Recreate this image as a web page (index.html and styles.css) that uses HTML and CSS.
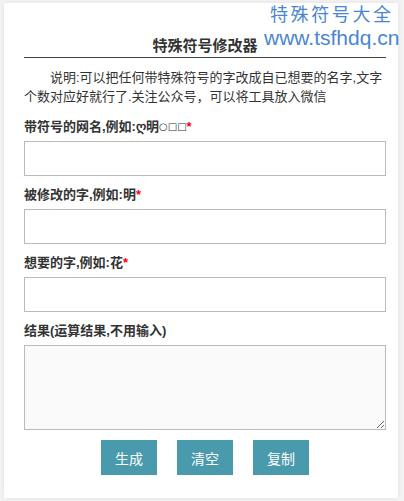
FILE: index.html
```html
<!DOCTYPE html>
<html lang="zh">
<head>
<meta charset="utf-8">
<title>特殊符号修改器</title>
<link rel="stylesheet" href="styles.css">
</head>
<body>
<div class="card">
  <h1 class="title">特殊符号修改器</h1>
  <p class="desc">说明:可以把任何带特殊符号的字改成自已想要的名字,文字个数对应好就行了.关注公众号，可以将工具放入微信</p>
  <div class="field">
    <label class="label">带符号的网名,例如:ღ明<span class="sym">○□□</span><span class="req">*</span></label>
    <input class="input" type="text">
  </div>
  <div class="field">
    <label class="label">被修改的字,例如:明<span class="req">*</span></label>
    <input class="input" type="text">
  </div>
  <div class="field">
    <label class="label">想要的字,例如:花<span class="req">*</span></label>
    <input class="input" type="text">
  </div>
  <div class="field">
    <label class="label">结果(运算结果,不用输入)</label>
    <textarea class="result"></textarea>
  </div>
  <div class="actions">
    <button class="btn">生成</button>
    <button class="btn">清空</button>
    <button class="btn">复制</button>
  </div>
</div>
<div class="watermark">
  <div class="wm-cn">特殊符号大全</div>
  <div class="wm-en">www.tsfhdq.cn</div>
</div>
</body>
</html>
```
FILE: styles.css
```css
html, body {
  margin: 0;
  padding: 0;
}
body {
  background: #f3f3f3;
  font-family: "Liberation Sans", "Noto Sans CJK SC", sans-serif;
  color: #333;
  font-size: 13px;
  position: relative;
  height: 501px;
  overflow: hidden;
}
.card {
  margin: 3px 6px 0 4px;
  background: #fff;
  box-shadow: 0 0 5px rgba(0,0,0,0.08);
  padding: 32px 12px 23px 20px;
}
.title {
  margin: 0;
  font-size: 15px;
  font-weight: bold;
  line-height: 21px;
  text-align: center;
  padding-bottom: 1px;
  border-bottom: 1px solid #444;
  color: #333;
}
.desc {
  margin: 10px 0 0 0;
  text-indent: 2em;
  line-height: 19px;
  font-size: 13px;
  color: #333;
}
.field {
  margin-top: 11px;
  display: flex;
  flex-direction: column;
}
.field + .field {
  margin-top: 9px;
}
.label {
  font-weight: bold;
  line-height: 20px;
  height: 20px;
  margin-bottom: 4px;
  color: #333;
}
.sym {
  font-size: 10px;
  font-weight: normal;
  font-family: "DejaVu Sans", sans-serif;
  vertical-align: 1px;
}
.req {
  color: #f00;
  font-weight: bold;
}
.input {
  box-sizing: border-box;
  width: 362px;
  height: 35px;
  margin: 0;
  border: 1px solid #bbb;
  background: #fff;
  padding: 0 8px;
  outline: none;
}
.result {
  box-sizing: border-box;
  width: 362px;
  height: 85px;
  margin: 0;
  border: 1px solid #bbb;
  background: #fafafa;
  padding: 6px 8px;
  resize: both;
  outline: none;
  display: block;
}
.actions {
  margin-top: 10px;
  display: flex;
  justify-content: center;
  gap: 20px;
}
.btn {
  width: 56px;
  height: 35px;
  border: none;
  background: #4a9aad;
  color: #fff;
  font-family: "Noto Sans CJK SC", sans-serif;
  font-size: 14px;
  padding: 0;
  margin: 0;
}
.watermark {
  position: absolute;
  top: 2px;
  left: 264px;
  color: #4a86d0;
}
.wm-cn {
  font-family: "Noto Sans CJK SC", sans-serif;
  font-size: 18px;
  letter-spacing: 2.6px;
  line-height: 22px;
  padding-left: 6px;
}
.wm-en {
  font-family: "Liberation Sans", sans-serif;
  font-size: 21px;
  line-height: 24px;
  margin-top: 2px;
}
```
